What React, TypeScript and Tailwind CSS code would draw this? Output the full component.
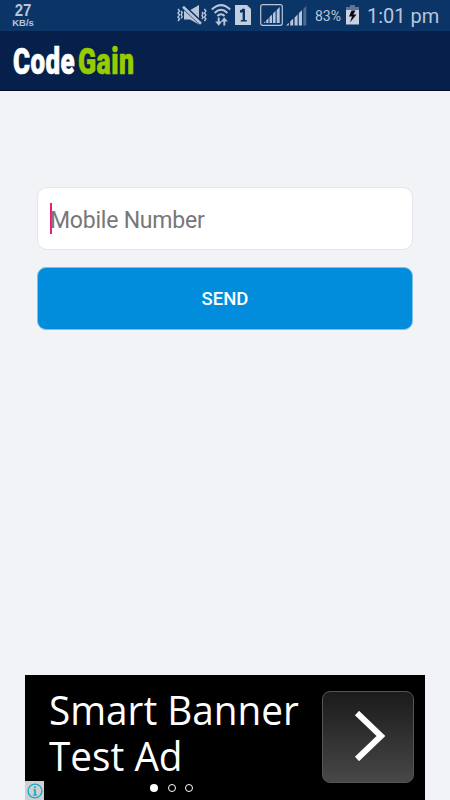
const statusColor = '#b9c5db';

function MuteIcon() {
  return (
    <svg width="30" height="20" viewBox="0 0 30 20" fill="none" stroke={statusColor} className="shrink-0">
      <path d="M1 4l1.5 2L1 8l1.5 2L1 12l1.5 2L1 16M4.2 6l1 1.5-1 2 1 2-1 2" strokeWidth="1.4" />
      <path d="M7 5.5h5.5L22 0v19.5L13 14.5H7z" fill={statusColor} stroke="none" />
      <path d="M6 1.2L24.5 18.5" stroke="#0b3566" strokeWidth="4.6" />
      <path d="M6 1.8L24 18.8" strokeWidth="2.6" />
      <path d="M25 7l1 1.5-1 2 1 2-1 1.5M27.4 4l1.5 2-1.5 2 1.5 2-1.5 2 1.5 2-1.5 2" strokeWidth="1.4" />
    </svg>
  );
}

function WifiIcon() {
  return (
    <svg width="20" height="22" viewBox="0 0 20 22" fill="none" stroke={statusColor} strokeWidth="2" className="shrink-0">
      <path d="M.8 5.5Q10-3.2 19.2 5.5M3.6 9Q10 2.6 16.4 9M6.4 12Q10 8.3 13.6 12" />
      <path d="M7.7 13.5v5M13.3 21.5v-5" strokeWidth="1.9" />
      <path d="M4.2 17.4h7L7.7 21.8zM9.8 17.4l3.5-4.2 3.5 4.2z" fill={statusColor} stroke="none" />
    </svg>
  );
}

function SimIcon() {
  return (
    <div className="flex h-5 w-4 shrink-0 items-center justify-center bg-[#c3cde0] [clip-path:polygon(0_0,75%_0,100%_20%,100%_100%,0_100%)]">
      <svg width="9" height="14" viewBox="0 0 9 14" fill="none" stroke="#0b3566">
        <path d="M1 3.5Q4 3.2 4.8 1v12" strokeWidth="2.4" />
        <path d="M1.8 12.8h6" strokeWidth="1.6" />
      </svg>
    </div>
  );
}

function BoxedSignalIcon() {
  return (
    <svg width="23" height="22" viewBox="0 0 23 22" className="shrink-0">
      <rect x=".7" y=".7" width="21.6" height="20.6" rx="2" fill="none" stroke={statusColor} strokeWidth="1.2" />
      <path d="M3.5 19l1.8-1.8V19zM6.2 16.4l2.3-2.3V19H6.2zM9.5 13l2.6-2.6V19H9.5zM13 9.5l2.6-2.6V19H13zM16.7 6l3-3v16h-3z" fill={statusColor} />
    </svg>
  );
}

function SignalIcon() {
  return (
    <svg width="21" height="20" viewBox="0 0 21 20" fill={statusColor} className="shrink-0">
      <path d="M0 19.5l2.8-2.7v2.7zM4.2 15.6l3-3v6.9h-3zM8.6 11.4l3-3v11.1h-3zM12.8 7.3l3.2-3.2v15.4h-3.2z" />
      <path d="M17.3 3l3-3v19.5h-3z" opacity=".38" />
    </svg>
  );
}

function BatteryIcon() {
  return (
    <svg width="13" height="20" viewBox="0 0 13 20" className="shrink-0">
      <path d="M4 0h5v2h4v3H0V2h4z" fill="#5d7599" />
      <path d="M0 5h13v14.5H0z" fill="#c9d2e2" />
      <path d="M5.5 5.5L3 11.5h3L4 17.5l6.5-8H7.3l2.2-4z" fill="#05090f" />
    </svg>
  );
}

function StatusBar() {
  return (
    <div className="flex h-[31px] bg-[#0b3566] text-[#b9c5db]">
      <div className="ml-[11px] w-6 pt-[3px] text-center font-['Liberation_Sans',sans-serif] font-bold">
        <div className="scale-x-[0.88] text-[17px] leading-[16px]">27</div>
        <div className="text-[9.5px] leading-[8px] whitespace-nowrap">KB/s</div>
      </div>
      <div className="ml-[142px] flex h-[30px] items-center">
        <MuteIcon />
        <div className="ml-1 flex"><WifiIcon /></div>
        <div className="ml-1 flex"><SimIcon /></div>
        <div className="ml-[9px] flex"><BoxedSignalIcon /></div>
        <div className="mt-[2px] ml-[3px] flex"><SignalIcon /></div>
        <span className="mt-[2px] ml-[8px] w-[31px] text-[14px] leading-5">83%</span>
        <BatteryIcon />
        <span className="mt-[2px] ml-[8px] text-[20px] leading-6 whitespace-nowrap">1:01 pm</span>
      </div>
    </div>
  );
}

function Header() {
  return (
    <header className="flex h-[60px] items-center border-b border-[#020b2e] bg-[#061f4b] pt-[2px] pl-[13px] text-[36px] leading-none font-black tracking-[0.6px]">
      <div className="w-[65px]">
        <span className="inline-block origin-left scale-x-[0.72] text-white [-webkit-text-stroke:0.7px_#fff]">Code</span>
      </div>
      <span className="inline-block origin-left scale-x-[0.74] text-[#99cc00] [-webkit-text-stroke:0.7px_#99cc00]">Gain</span>
    </header>
  );
}

function AdBanner() {
  return (
    <div className="relative mx-[25px] flex h-[125px] bg-black">
      <div className="w-[297px] pt-[12px] pl-[24px] font-['Open_Sans','Noto_Sans',sans-serif] text-[40px] leading-[46px] whitespace-nowrap text-white">
        <div className="origin-left scale-x-[0.968]">Smart Banner</div>
        <div className="origin-left scale-x-[0.968]">Test Ad</div>
      </div>
      <div className="mt-4 flex h-[92px] w-[92px] items-center justify-center rounded-[8px] border-[1.5px] border-[#555] bg-linear-to-b from-[#1b1b1b] to-[#484848]">
        <svg width="32" height="50" viewBox="0 0 32 50" fill="none" stroke="#fff" strokeWidth="6" className="mb-[2px] ml-1">
          <path d="M3 2l24 23L3 48" />
        </svg>
      </div>

      {/* Page dots */}
      <div className="absolute bottom-[8px] left-[125px] flex gap-[9.5px]">
        <span className="size-2 rounded-full bg-white" />
        <span className="size-2 rounded-full border-[1.5px] border-white" />
        <span className="size-2 rounded-full border-[1.5px] border-white" />
      </div>

      {/* Ad info badge */}
      <div className="absolute bottom-0 left-0 flex size-[19px] items-center justify-center bg-[#d0d0d0]">
        <svg width="16" height="16" viewBox="0 0 16 16" fill="none" stroke="#14accb">
          <circle cx="8" cy="8" r="6.9" strokeWidth="1.4" />
          <path d="M8 3.3v1.9M6.5 7H8v5M6.3 12h3.6" strokeWidth="1.7" />
        </svg>
      </div>
    </div>
  );
}

export default function App() {
  return (
    <div className="flex h-[800px] w-[450px] flex-col overflow-hidden bg-[#f2f3f6] font-[Roboto,sans-serif]">
      <StatusBar />
      <Header />
      <main className="flex flex-1 flex-col px-[37px] pt-24">
        <div className="flex h-[63px] items-center rounded-[10px] border-[1.5px] border-[#e3e6ea] bg-white pl-[12px]">
          <span className="h-[31px] w-[2px] bg-[#f01b79]" />
          <span className="-ml-[2px] pt-[3px] text-[23px] leading-none tracking-[-0.22px] text-[#777]">Mobile Number</span>
        </div>
        <button className="mt-[17px] h-[63px] rounded-[9px] border border-[#7fbfe8] bg-[#028ddc] pt-[2px] text-[18.5px] font-medium text-white">
          SEND
        </button>
      </main>
      <AdBanner />
    </div>
  );
}
